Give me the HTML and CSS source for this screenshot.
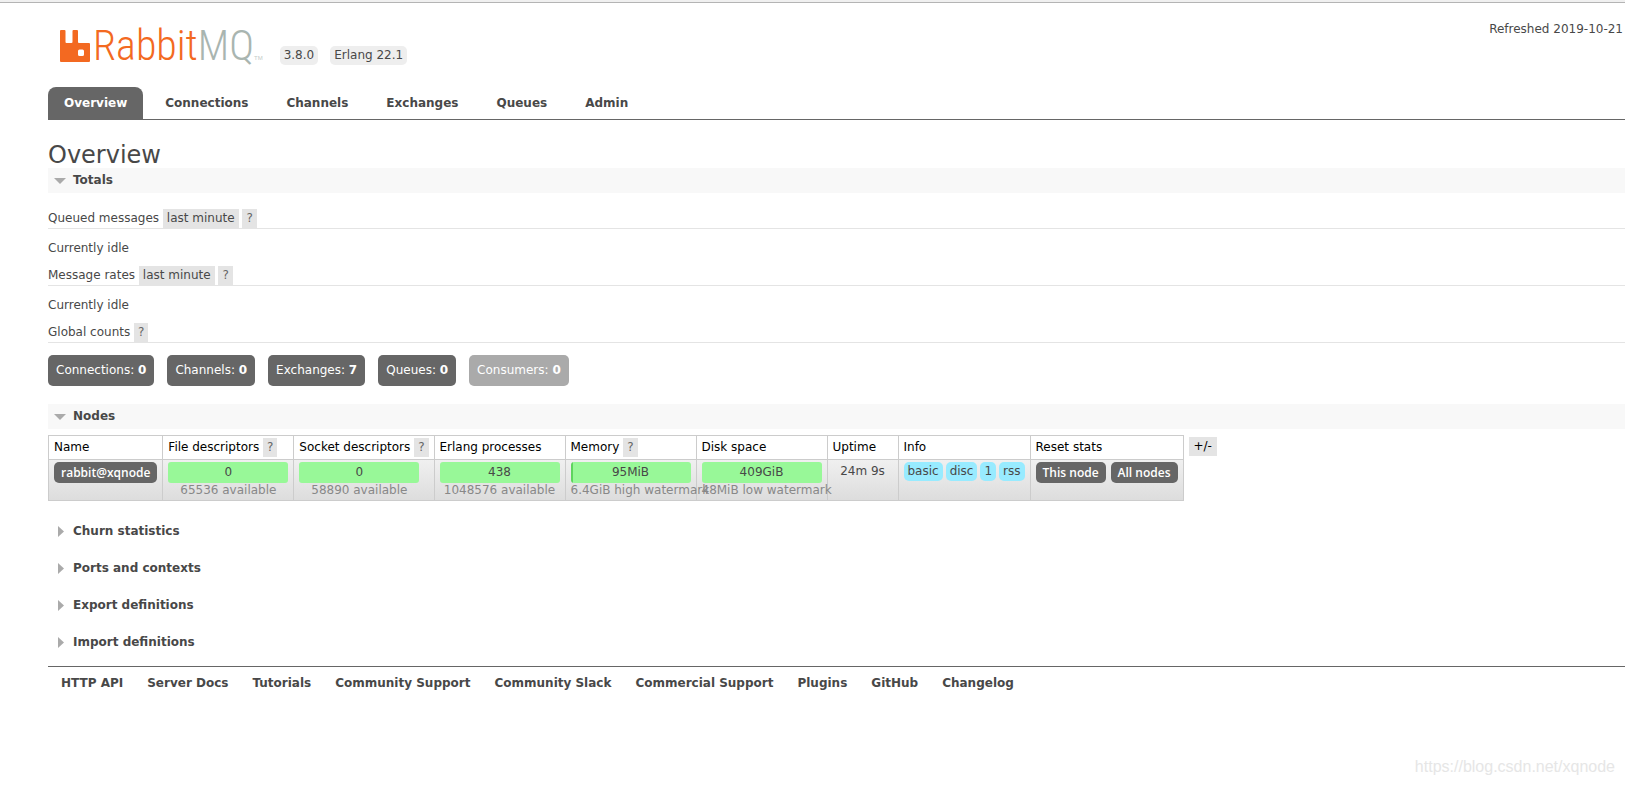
FILE: index.html
```html
<!DOCTYPE html>
<html lang="en">
<head>
<meta charset="utf-8">
<title>RabbitMQ Management</title>
<link rel="stylesheet" href="styles.css">
</head>
<body>
<header class="header">
  <div class="brand">
    <a class="logo" href="#" aria-label="RabbitMQ">
      <svg class="logo-mark" viewBox="0 0 30 32" aria-hidden="true">
        <path fill="#f36921" fill-rule="evenodd" d="M1 0H4.500Q5.500 0 5.500 1V12Q5.500 13 6.500 13H11.500Q12.500 13 12.500 12V1Q12.500 0 13.500 0H17Q18 0 18 1V12Q18 13 19 13H29Q30 13 30 14V31Q30 32 29 32H1Q0 32 0 31V1Q0 0 1 0ZM19.500 19.500Q18 19.500 18 21V24.500Q18 26 19.500 26H22.500Q24 26 24 24.500V21Q24 19.500 22.500 19.500Z"/>
      </svg>
      <span class="logo-name">Rabbit<span class="logo-mq">MQ</span></span><span class="logo-tm">TM</span>
    </a>
    <span class="version">3.8.0</span>
    <span class="version">Erlang 22.1</span>
  </div>
  <p class="refreshed">Refreshed 2019-10-21</p>
</header>

<nav class="tabs">
  <a class="tab tab-selected" href="#">Overview</a>
  <a class="tab" href="#">Connections</a>
  <a class="tab" href="#">Channels</a>
  <a class="tab" href="#">Exchanges</a>
  <a class="tab" href="#">Queues</a>
  <a class="tab" href="#">Admin</a>
</nav>

<main class="main">
  <h1 class="title">Overview</h1>

  <section>
    <h2 class="section-head section-open"><button class="toggle" type="button"><svg class="arrow" viewBox="0 0 12 12" aria-hidden="true"><path fill="#aaa" d="M0 3H12L6 9Z"/></svg>Totals</button></h2>
    <div class="totals">
      <h3 class="sub-head">Queued messages <button class="chip" type="button">last minute</button> <button class="chip help" type="button">?</button></h3>
      <p class="idle">Currently idle</p>
      <h3 class="sub-head">Message rates <button class="chip" type="button">last minute</button> <button class="chip help" type="button">?</button></h3>
      <p class="idle">Currently idle</p>
      <h3 class="sub-head">Global counts <button class="chip help" type="button">?</button></h3>
      <div class="counts">
        <a class="count" href="#">Connections: <strong>0</strong></a>
        <a class="count" href="#">Channels: <strong>0</strong></a>
        <a class="count" href="#">Exchanges: <strong>7</strong></a>
        <a class="count" href="#">Queues: <strong>0</strong></a>
        <span class="count count-off">Consumers: <strong>0</strong></span>
      </div>
    </div>
  </section>

  <section>
    <h2 class="section-head section-open"><button class="toggle" type="button"><svg class="arrow" viewBox="0 0 12 12" aria-hidden="true"><path fill="#aaa" d="M0 3H12L6 9Z"/></svg>Nodes</button></h2>
    <div class="nodes">
      <table class="node-table">
        <thead>
          <tr>
            <th>Name</th>
            <th>File descriptors <button class="chip help" type="button">?</button></th>
            <th>Socket descriptors <button class="chip help" type="button">?</button></th>
            <th>Erlang processes</th>
            <th>Memory <button class="chip help" type="button">?</button></th>
            <th>Disk space</th>
            <th class="uptime-head">Uptime</th>
            <th>Info</th>
            <th>Reset stats</th>
          </tr>
        </thead>
        <tbody>
          <tr>
            <td><a class="action" href="#">rabbit@xqnode</a></td>
            <td><div class="stat"><div class="bar">0</div><div class="limit">65536 available</div></div></td>
            <td><div class="stat"><div class="bar">0</div><div class="limit">58890 available</div></div></td>
            <td><div class="stat"><div class="bar">438</div><div class="limit">1048576 available</div></div></td>
            <td><div class="stat"><div class="bar bar-used">95MiB</div><div class="limit">6.4GiB high watermark</div></div></td>
            <td><div class="stat"><div class="bar">409GiB</div><div class="limit">48MiB low watermark</div></div></td>
            <td class="uptime">24m 9s</td>
            <td><div class="group group-tight"><span class="info">basic</span><span class="info">disc</span><span class="info">1</span><span class="info">rss</span></div></td>
            <td><div class="group"><button class="action" type="button">This node</button><button class="action" type="button">All nodes</button></div></td>
          </tr>
        </tbody>
      </table>
      <button class="chip columns" type="button">+/-</button>
    </div>
  </section>

  <div class="closed">
    <h2 class="section-head"><button class="toggle" type="button"><svg class="arrow" viewBox="0 0 12 12" aria-hidden="true"><path fill="#aaa" d="M4 0V11L10 5.500Z"/></svg>Churn statistics</button></h2>
    <h2 class="section-head"><button class="toggle" type="button"><svg class="arrow" viewBox="0 0 12 12" aria-hidden="true"><path fill="#aaa" d="M4 0V11L10 5.500Z"/></svg>Ports and contexts</button></h2>
    <h2 class="section-head"><button class="toggle" type="button"><svg class="arrow" viewBox="0 0 12 12" aria-hidden="true"><path fill="#aaa" d="M4 0V11L10 5.500Z"/></svg>Export definitions</button></h2>
    <h2 class="section-head"><button class="toggle" type="button"><svg class="arrow" viewBox="0 0 12 12" aria-hidden="true"><path fill="#aaa" d="M4 0V11L10 5.500Z"/></svg>Import definitions</button></h2>
  </div>
</main>

<footer class="footer">
  <a href="#">HTTP API</a>
  <a href="#">Server Docs</a>
  <a href="#">Tutorials</a>
  <a href="#">Community Support</a>
  <a href="#">Community Slack</a>
  <a href="#">Commercial Support</a>
  <a href="#">Plugins</a>
  <a href="#">GitHub</a>
  <a href="#">Changelog</a>
</footer>
<p class="watermark">https://blog.csdn.net/xqnode</p>
</body>
</html>
```
FILE: styles.css
```css
* { box-sizing: border-box; }

body {
  margin: 0;
  padding-left: 48px;
  border-top: 2px solid #f0f0f0;
  background: #fff;
  color: #484848;
  font: 12px/19px Verdana, "DejaVu Sans", sans-serif;
}

h1, h2, h3, p { margin: 0; font-size: 12px; font-weight: normal; }
a { color: inherit; text-decoration: none; }
button { margin: 0; border: 0; background: none; color: inherit; font: inherit; cursor: pointer; }

.header {
  display: flex;
  justify-content: space-between;
  align-items: flex-start;
  height: 85px;
  margin-left: -48px;
  padding: 17px 2px 0 60px;
  border-top: 1px solid #b4b4b4;
}
.brand { display: flex; align-items: flex-end; gap: 12px; height: 45px; }
.logo { display: flex; align-items: flex-end; height: 36px; margin: 0 5px 3px 0; }
.logo-mark { width: 30px; height: 32px; margin-right: 3px; }
.logo-name {
  color: #f36921;
  font: 300 42px/32px "Roboto Condensed", Roboto, sans-serif;
}
.logo-mq { color: #a9b5b0; }
.logo-tm { color: #c4ccc8; font: 6px/8px "Liberation Sans", sans-serif; }
.version { padding: 0 4px; border-radius: 5px; background: #eee; }

.tabs { display: flex; gap: 6px; border-bottom: 1px solid #666; }
.tab { padding: 7px 16px 6px; border-radius: 8px 8px 0 0; font-weight: bold; }
.tab-selected { background: #666; color: #fff; }

.title { padding-top: 22px; font-size: 24px; line-height: 26px; }

.section-head { font-weight: bold; }
.section-open { background: #f8f8f8; }
.toggle { display: flex; align-items: center; gap: 7px; width: 100%; height: 25px; padding: 0 0 0 6px; text-align: left; }
.arrow { width: 12px; height: 12px; }

.totals { padding: 16px 0 18px; }
.sub-head { border-bottom: 1px solid #e4e4e4; }
.idle { padding: 10px 0 8px; }
.chip { height: 19px; padding: 0 4px; background: #e4e4e4; vertical-align: top; }
.counts { display: flex; gap: 13px; padding-top: 12px; }
.count { padding: 6px 8px; border-radius: 5px; background: #666; color: #fff; }
.count-off { background: #aaa; }

.nodes { display: flex; align-items: flex-start; gap: 5px; padding-top: 6px; }
.node-table { border-collapse: collapse; white-space: nowrap; }
.node-table th, .node-table td { padding: 2px 5px; border: 1px solid #ccc; text-align: left; vertical-align: top; }
.node-table th { color: #000; font-weight: normal; }
.node-table tbody tr { background: linear-gradient(#f0f0f0, #dcdcdc); }
.help { color: #666; }
.stat { width: 120px; }
.bar { border-radius: 3px; background: #98f898; line-height: 21px; text-align: center; }
.bar-used { background: linear-gradient(90deg, #5ed45e 2px, #98f898 2px); }
.limit { display: flex; justify-content: safe center; color: #888; line-height: 15px; }
.node-table .uptime { text-align: center; }
.node-table .uptime-head { width: 71px; }
.group { display: flex; gap: 5px; }
.group-tight { gap: 3px; }
.info { padding: 0 4px; border-radius: 5px; background: #98ebff; }
.action {
  display: block;
  padding: 1px 7px;
  border-radius: 5px;
  background: #666;
  color: #fff;
  font-family: "Open Sans", sans-serif;
  font-weight: 600;
}
.columns { margin-top: 2px; padding: 0 5px; color: #000; }

.closed { display: flex; flex-direction: column; gap: 12px; padding: 18px 0 11px; }

.footer { display: flex; gap: 24px; padding: 7px 13px; border-top: 1px solid #666; font-weight: bold; }

.watermark {
  padding: 57px 10px 0 0;
  color: #e6e6e6;
  font: 16px/20px "Liberation Sans", Arial, sans-serif;
  text-align: right;
}
```
